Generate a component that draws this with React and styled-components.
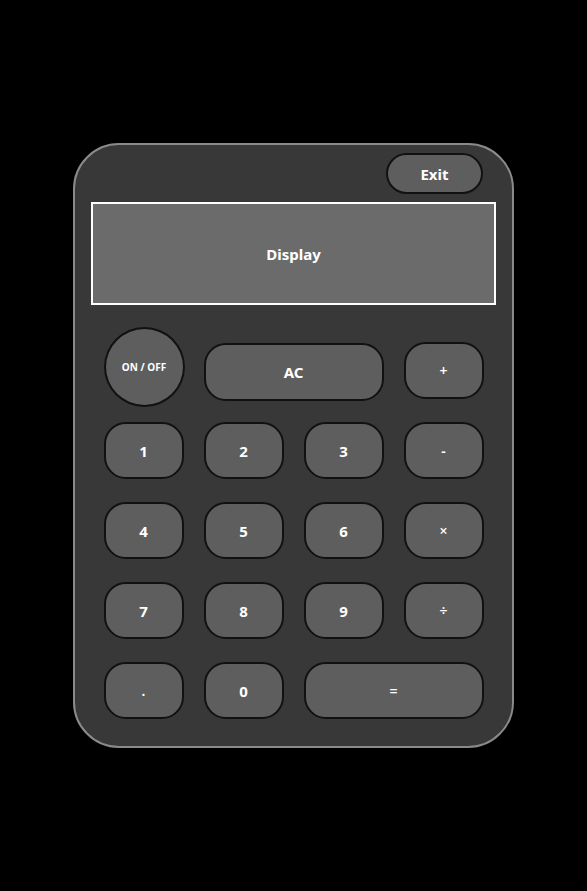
import styled, { createGlobalStyle } from "styled-components"

const GlobalStyle = createGlobalStyle`
    *{
        box-sizing: border-box;
    }
    body{
        margin: 0;
        background-color: #000000;
        font-family: "Noto Sans", "Open Sans", sans-serif;
    }
`

const keys = [
    ["1", "2", "3", "-"],
    ["4", "5", "6", "×"],
    ["7", "8", "9", "÷"],
]

export default function App() {
    return (
        <Page>
            <GlobalStyle />
            <Body>
                <TopBar>
                    <ExitButton>Exit</ExitButton>
                </TopBar>
                <Display>Display</Display>
                <Keypad>
                    <PowerKey>ON / OFF</PowerKey>
                    <Key $span={2} $wide $top>AC</Key>
                    <Key $top $small>+</Key>
                    {keys.flat().map((k) => (
                        <Key key={k} $small={isNaN(Number(k))}>{k}</Key>
                    ))}
                    <Key $small>.</Key>
                    <Key>0</Key>
                    <Key $span={2} $small>=</Key>
                </Keypad>
            </Body>
        </Page>
    )
}

const Page = styled.div`
    min-height: 100vh;
    display: flex;
    align-items: center;
    justify-content: center;
`

const Body = styled.div`
    width: 441px;
    height: 605px;
    background-color: #383838;
    border: 2px solid #8a8a8a;
    border-radius: 46px;
    display: flex;
    flex-direction: column;
    align-items: center;
    padding: 8px 0 0 0;
`

const TopBar = styled.div`
    width: 100%;
    display: flex;
    justify-content: flex-end;
    padding-right: 29px;
    margin-bottom: 8px;
`

const ExitButton = styled.button`
    width: 97px;
    height: 41px;
    border: 2px solid #111111;
    border-radius: 21px;
    background-color: #5e5e5e;
    color: #ffffff;
    font-family: inherit;
    font-weight: 700;
    font-size: 15px;
    padding: 0;
`

const Display = styled.div`
    width: 405px;
    height: 103px;
    border: 2px solid #ffffff;
    background-color: #6b6b6b;
    color: #ffffff;
    font-weight: 700;
    font-size: 15px;
    display: flex;
    align-items: center;
    justify-content: center;
    margin-bottom: 22px;
`

const Keypad = styled.div`
    display: grid;
    grid-template-columns: repeat(4, 80px);
    grid-template-rows: 72px repeat(4, 57px);
    column-gap: 20px;
    row-gap: 23px;
`

const Key = styled.button`
    grid-column: span ${({ $span }) => $span || 1};
    height: ${({ $wide }) => ($wide ? "58px" : "57px")};
    margin-top: ${({ $top, $wide }) => ($top ? ($wide ? "16px" : "15px") : "0")};
    border: 2px solid #111111;
    border-radius: 22px;
    background-color: #5e5e5e;
    color: #ffffff;
    font-family: inherit;
    font-weight: ${({ $small }) => ($small ? 600 : 700)};
    font-size: ${({ $small }) => ($small ? "14px" : "15px")};
    padding: 0;
    display: flex;
    align-items: center;
    justify-content: center;
`

const PowerKey = styled.button`
    width: 81px;
    height: 80px;
    border: 2px solid #111111;
    border-radius: 50%;
    background-color: #5e5e5e;
    color: #ffffff;
    font-family: inherit;
    font-weight: 700;
    font-size: 10px;
    padding: 0;
`
